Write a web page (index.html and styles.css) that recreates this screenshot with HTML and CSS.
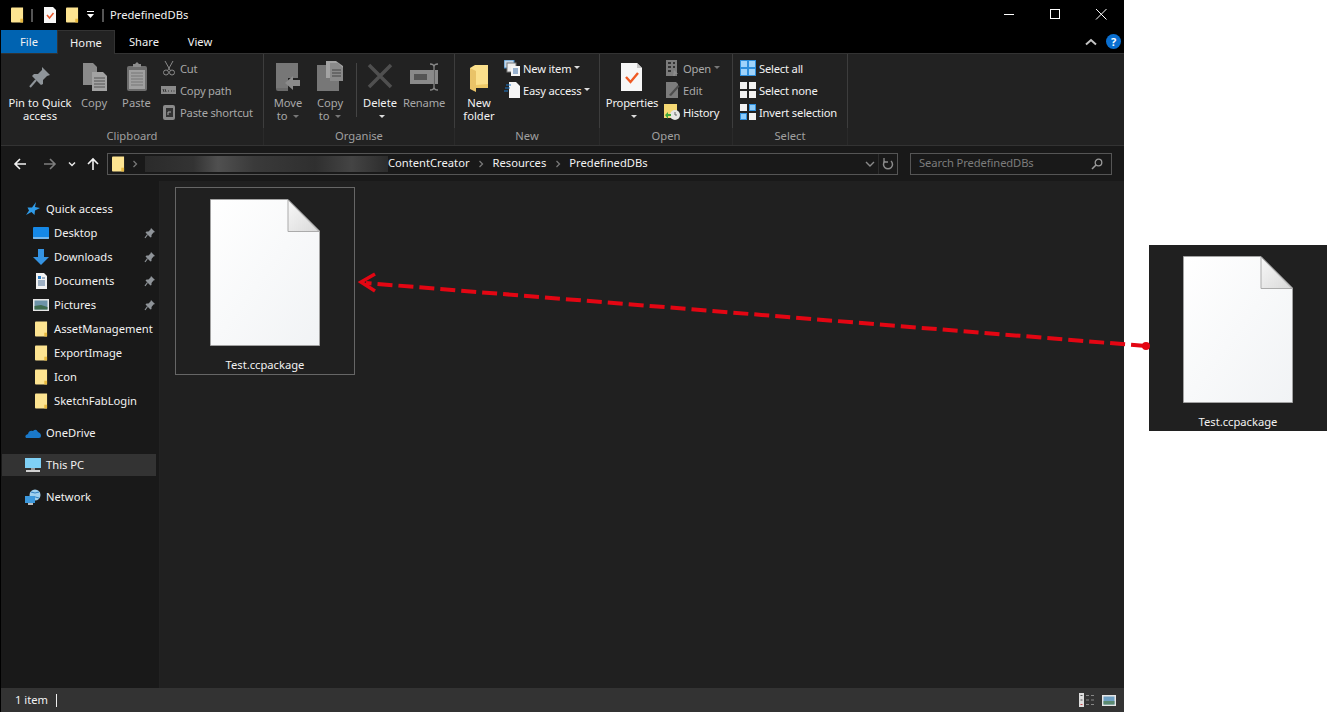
FILE: index.html
```html
<!DOCTYPE html>
<html lang="en">
<head>
    <meta charset="utf-8">
    <title>PredefinedDBs</title>
    <link rel="stylesheet" href="styles.css">
</head>
<body>
<svg class="defs" width="0" height="0">
    <defs>
        <symbol id="folder" viewBox="0 0 14 16">
            <path d="M0 1Q0 0 1 0H13V16H1Q0 16 0 15Z" fill="#fde491"/>
            <path d="M10 12H13V16H10Z" fill="#e8b93f"/>
        </symbol>
        <symbol id="pin" viewBox="0 0 12 12">
            <path d="M7 1L11 5L9.500 5.500L7.500 8V10L6.500 10.500L1.500 5.500L2.500 4.500H4.500L6.500 2.500Z" fill="#8f9499"/>
            <path d="M3.500 7.500L1 11" stroke="#8f9499" stroke-width="1.200"/>
        </symbol>
        <symbol id="doc" viewBox="0 0 110 147">
            <linearGradient id="paper" x1="0" y1="0" x2="1" y2="1">
                <stop offset="0" stop-color="#ffffff"/>
                <stop offset="1" stop-color="#f1f3f5"/>
            </linearGradient>
            <linearGradient id="fold" x1="0" y1="0" x2="1" y2="1">
                <stop offset="0" stop-color="#f8f8f8"/>
                <stop offset="1" stop-color="#d9d9d9"/>
            </linearGradient>
            <path d="M.5 .5H78L109.500 32V146.500H.5Z" fill="url(#paper)" stroke="#a2a2a2"/>
            <path d="M78 1V32.500H109Z" fill="url(#fold)" stroke="#ababab"/>
        </symbol>
    </defs>
</svg>

<div class="window">
    <header class="titlebar">
        <svg class="qa-folder"><use href="#folder"/></svg>
        <span class="qa-sep"></span>
        <svg class="qa-props" viewBox="0 0 12 16">
            <path d="M0 0H9L12 3V16H0Z" fill="#f7f7f7"/>
            <path d="M3 8L5.500 11L9.500 6" fill="none" stroke="#e8562a" stroke-width="1.500"/>
        </svg>
        <svg class="qa-folder qa-folder-2"><use href="#folder"/></svg>
        <svg class="qa-menu" viewBox="0 0 8 8">
            <path d="M0 .5H7" stroke="#fff"/>
            <path d="M0 3H7L3.500 7Z" fill="#fff"/>
        </svg>
        <span class="qa-sep qa-sep-2"></span>
        <span class="title-text">PredefinedDBs</span>
        <div class="window-controls">
            <svg viewBox="0 0 46 30"><path d="M18 14.500H28" stroke="#fff"/></svg>
            <svg viewBox="0 0 46 30"><rect x="18.500" y="9.500" width="9" height="9" fill="none" stroke="#fff"/></svg>
            <svg viewBox="0 0 46 30"><path d="M18 9L28.500 19.500M28.500 9L18 19.500" stroke="#fff"/></svg>
        </div>
    </header>

    <nav class="tabs">
        <span class="tab tab-file">File</span>
        <span class="tab tab-home">Home</span>
        <span class="tab tab-share">Share</span>
        <span class="tab tab-view">View</span>
        <svg class="collapse" viewBox="0 0 12 8"><path d="M1 6.500L6 2L11 6.500" fill="none" stroke="#c4c4c4" stroke-width="2"/></svg>
        <span class="help">?</span>
    </nav>

    <section class="ribbon">
        <div class="group group-clipboard">
            <div class="tools">
                <div class="big w-pin on">
                    <svg viewBox="0 0 32 32"><path d="M18 7L26 15L23 16L19 20V24L17 25L8 16L10 14H14L18 10Z" fill="#8f959a"/><path d="M12 20L6 27" stroke="#8f959a" stroke-width="2"/></svg>
                    <span>Pin to Quick<br>access</span>
                </div>
                <div class="big w-copy">
                    <svg viewBox="0 0 32 32"><path d="M5 3H15L19 7V25H5Z" fill="#8a8a8a"/><path d="M14 12H25L29 16V31H14Z" fill="#a3a3a3"/><path d="M16 18H27M16 21H27M16 24H27M16 27H27" stroke="#555"/></svg>
                    <span>Copy</span>
                </div>
                <div class="big w-paste">
                    <svg viewBox="0 0 32 32"><rect x="6" y="6" width="20" height="25" rx="2" fill="#6e6e6e"/><rect x="8" y="10" width="16" height="19" fill="#a0a0a0"/><path d="M12 7V4H14L16 2L18 4H20V7Z" fill="#8c8c8c"/><path d="M10 13H22M10 16H22M10 19H22M10 22H22M10 25H22" stroke="#777"/></svg>
                    <span>Paste</span>
                </div>
                <div class="smalls smalls-clip">
                    <div class="small"><svg viewBox="0 0 16 16"><path d="M4 1L9 10M12 1L7 10" stroke="#8a8a8a" fill="none"/><circle cx="5" cy="12.500" r="2.500" fill="none" stroke="#8a8a8a"/><circle cx="11" cy="12.500" r="2.500" fill="none" stroke="#8a8a8a"/></svg>Cut</div>
                    <div class="small"><svg viewBox="0 0 16 16"><rect x="0" y="4" width="15" height="8" fill="#8a8a8a"/><path d="M2 7L3 10M4 7L5 10M7 9H8M10 9H11M12.500 9H13.500" stroke="#333"/></svg>Copy path</div>
                    <div class="small"><svg viewBox="0 0 16 16"><rect x="2" y="1" width="12" height="15" rx="2" fill="#8a8a8a"/><rect x="5" y="4" width="7" height="9" fill="#333"/><path d="M7 11V8H10" stroke="#aaa" fill="none"/></svg>Paste shortcut</div>
                </div>
            </div>
            <div class="group-label">Clipboard</div>
        </div>

        <div class="group group-organise">
            <div class="tools">
                <div class="big w-move">
                    <svg viewBox="0 0 32 32"><path d="M4 3H26V18H16V28H4Z" fill="#777"/><path d="M4 28H16V31H6Q4 31 4 29Z" fill="#6a6a6a"/><path d="M28 20V26H21V30L13 23L21 16V20Z" fill="#8b8b8b"/></svg>
                    <span>Move<br>to <i class="caret"></i></span>
                </div>
                <div class="big w-copyto">
                    <svg viewBox="0 0 32 32"><path d="M3 5H25V31H3Z" fill="#777"/><path d="M12 1H22L29 6V18H12Z" fill="#a3a3a3"/><path d="M16 3H24L29 8V21H16Z" fill="#8a8a8a"/><path d="M18 10H27M18 13H27M18 16H27" stroke="#444"/></svg>
                    <span>Copy<br>to <i class="caret"></i></span>
                </div>
                <span class="ribbon-divider"></span>
                <div class="big w-delete on">
                    <svg viewBox="0 0 32 32"><path d="M5 5L27 27M27 5L5 27" stroke="#4f4f4f" stroke-width="3.500"/></svg>
                    <span>Delete<br><i class="caret caret-on"></i></span>
                </div>
                <div class="big w-rename">
                    <svg viewBox="0 0 32 32"><rect x="2" y="10" width="24" height="14" fill="#8a8a8a"/><rect x="6" y="14" width="13" height="6" fill="#555"/><path d="M26 6V28M22 4Q26 4 26 7Q26 4 30 4M22 30Q26 30 26 27Q26 30 30 30" stroke="#888" fill="none" stroke-width="1.300"/><rect x="27" y="10" width="3" height="14" fill="#8a8a8a"/></svg>
                    <span>Rename</span>
                </div>
            </div>
            <div class="group-label">Organise</div>
        </div>

        <div class="group group-new">
            <div class="tools">
                <div class="big w-newfolder on">
                    <svg viewBox="0 0 32 32"><path d="M7 8L12 5H25V28H7Z" fill="#fbe08c"/><path d="M7 8L13 11V32L7 29Z" fill="#e9c368"/><path d="M13 28H25V24L13 25Z" fill="#e8bf57" opacity=".7"/></svg>
                    <span>New<br>folder</span>
                </div>
                <div class="smalls smalls-new on">
                    <div class="small"><svg viewBox="0 0 16 16"><rect x="0" y="0" width="10" height="8" fill="#c5d6e6" stroke="#3a87c8"/><rect x="3" y="3" width="9" height="9" fill="#eee" stroke="#777"/><rect x="7" y="6" width="9" height="10" fill="#f5f5f5"/><path d="M9 9H14M9 11H14M9 13H14" stroke="#3a6ea8"/></svg>New item <i class="caret caret-on"></i></div>
                    <div class="small"><svg viewBox="0 0 16 16"><path d="M5 0H12L16 4V16H5Z" fill="#f5f5f5"/><path d="M2 3H7M1 6H6M0 9H4" stroke="#1e78c8" stroke-width="1.200"/></svg>Easy access <i class="caret caret-on"></i></div>
                </div>
            </div>
            <div class="group-label">New</div>
        </div>

        <div class="group group-open">
            <div class="tools">
                <div class="big w-props on">
                    <svg viewBox="0 0 32 32"><path d="M5 3H21L26 8V31H5Z" fill="#f7f7f7"/><path d="M21 3V8H26Z" fill="#c8c8c8"/><path d="M10 17L14.500 22L22 13" fill="none" stroke="#ef5a24" stroke-width="2.400"/></svg>
                    <span>Properties<br><i class="caret caret-on"></i></span>
                </div>
                <div class="smalls smalls-open">
                    <div class="small"><svg viewBox="0 0 16 16"><rect x="2" y="0" width="11" height="16" fill="#7c7c7c"/><path d="M4 3H7M9 3H11M4 7H7M9 7H11M4 11H7" stroke="#333" stroke-width="2"/><path d="M10 10L14 14H11V16H9Z" fill="#8c8c8c"/></svg>Open <i class="caret"></i></div>
                    <div class="small"><svg viewBox="0 0 16 16"><path d="M2 0H12L14 2V16H2Z" fill="#7c7c7c"/><path d="M5 13L14 3L15.500 4.500L7 14Z" fill="#4c4c4c"/></svg>Edit</div>
                    <div class="small on"><svg viewBox="0 0 16 16"><rect x="0" y="0" width="13" height="14" fill="#f5d873"/><circle cx="11" cy="11" r="5" fill="#e6e6e6"/><path d="M11 8V11H13" stroke="#666" fill="none"/><path d="M1 11L4 8V10H7V12H4V15Z" fill="#3ea83a"/></svg>History</div>
                </div>
            </div>
            <div class="group-label">Open</div>
        </div>

        <div class="group group-select">
            <div class="tools">
                <div class="smalls smalls-select on">
                    <div class="small"><span class="grid4 grid-all"><i></i><i></i><i></i><i></i></span>Select all</div>
                    <div class="small"><span class="grid4 grid-none"><i></i><i></i><i></i><i></i></span>Select none</div>
                    <div class="small"><span class="grid4 grid-invert"><i></i><i></i><i></i><i></i></span>Invert selection</div>
                </div>
            </div>
            <div class="group-label">Select</div>
        </div>
    </section>

    <div class="addressbar">
        <svg class="nav-btn nav-back" viewBox="0 0 14 14"><path d="M13 7H2M7 2L2 7L7 12" fill="none" stroke="#f2f2f2" stroke-width="1.600"/></svg>
        <svg class="nav-btn nav-forward" viewBox="0 0 14 14"><path d="M1 7H12M7 2L12 7L7 12" fill="none" stroke="#7e7e7e" stroke-width="1.600"/></svg>
        <svg class="nav-recent" viewBox="0 0 8 6"><path d="M1 1.500L4 4.500L7 1.500" fill="none" stroke="#e8e8e8" stroke-width="1.500"/></svg>
        <svg class="nav-btn nav-up" viewBox="0 0 14 14"><path d="M7 13V2M2 7L7 2L12 7" fill="none" stroke="#f2f2f2" stroke-width="1.600"/></svg>
        <div class="address">
            <svg class="addr-folder"><use href="#folder"/></svg>
            <svg class="crumb-sep crumb-first" viewBox="0 0 6 8"><path d="M1.500 1L4.500 4L1.500 7" fill="none" stroke="#777" stroke-width="1.300"/></svg>
            <span class="addr-blur"></span>
            <span class="crumb">ContentCreator</span>
            <svg class="crumb-sep" viewBox="0 0 6 8"><path d="M1.500 1L4.500 4L1.500 7" fill="none" stroke="#777" stroke-width="1.300"/></svg>
            <span class="crumb">Resources</span>
            <svg class="crumb-sep" viewBox="0 0 6 8"><path d="M1.500 1L4.500 4L1.500 7" fill="none" stroke="#777" stroke-width="1.300"/></svg>
            <span class="crumb">PredefinedDBs</span>
            <svg class="addr-drop" viewBox="0 0 10 6"><path d="M1 1L5 5L9 1" fill="none" stroke="#8a8a8a" stroke-width="1.400"/></svg>
            <span class="addr-split"></span>
            <svg class="addr-refresh" viewBox="0 0 12 14"><path d="M3 4A4.500 4.500 0 1 0 9 4" fill="none" stroke="#8a8a8a" stroke-width="1.500"/><path d="M2 1V5H6" fill="none" stroke="#8a8a8a" stroke-width="1.300"/></svg>
        </div>
        <div class="search">
            <span class="search-text">Search PredefinedDBs</span>
            <svg viewBox="0 0 12 12"><circle cx="7.500" cy="4.500" r="3.300" fill="none" stroke="#9a9a9a" stroke-width="1.300"/><path d="M5 7L1 11" stroke="#9a9a9a" stroke-width="1.600"/></svg>
        </div>
    </div>

    <div class="body">
        <aside class="tree">
            <div class="tree-section">
                <div class="tree-item">
                    <svg viewBox="0 0 16 16"><path d="M11 1L10 6L15 7L10 9.500L9.500 14L6.500 11L1 14L4 9.500L2.500 6.500L7 6.500Z" fill="#2f9be8"/></svg>
                    <span>Quick access</span>
                </div>
                <div class="tree-item child">
                    <svg viewBox="0 0 16 16"><rect x="0" y="2" width="16" height="12" rx="1" fill="#1688e6"/><path d="M0 13H16" stroke="#d6e6f2"/></svg>
                    <span>Desktop</span>
                    <svg class="pin"><use href="#pin"/></svg>
                </div>
                <div class="tree-item child">
                    <svg viewBox="0 0 16 16"><path d="M5 0H11V8H16L8 16L0 8H5Z" fill="#3593e2"/></svg>
                    <span>Downloads</span>
                    <svg class="pin"><use href="#pin"/></svg>
                </div>
                <div class="tree-item child">
                    <svg viewBox="0 0 16 16"><path d="M3 0H11L14 3V16H3Z" fill="#f2f2f2"/><path d="M5 3H8V6H5Z" fill="#2a7fc8"/><path d="M5 8H12M5 10H12M5 12H12M9 5H12" stroke="#4a6f95"/></svg>
                    <span>Documents</span>
                    <svg class="pin"><use href="#pin"/></svg>
                </div>
                <div class="tree-item child">
                    <svg viewBox="0 0 16 16"><rect x="0" y="2" width="16" height="12" fill="#e6e6e6"/><rect x="1.500" y="3.500" width="13" height="9" fill="#6d93a8"/><path d="M1.500 9L8 8L14.500 10V12.500H1.500Z" fill="#3f6b4e"/></svg>
                    <span>Pictures</span>
                    <svg class="pin"><use href="#pin"/></svg>
                </div>
                <div class="tree-item child">
                    <svg class="tree-folder"><use href="#folder"/></svg>
                    <span>AssetManagement</span>
                </div>
                <div class="tree-item child">
                    <svg class="tree-folder"><use href="#folder"/></svg>
                    <span>ExportImage</span>
                </div>
                <div class="tree-item child">
                    <svg class="tree-folder"><use href="#folder"/></svg>
                    <span>Icon</span>
                </div>
                <div class="tree-item child">
                    <svg class="tree-folder"><use href="#folder"/></svg>
                    <span>SketchFabLogin</span>
                </div>
            </div>
            <div class="tree-section">
                <div class="tree-item">
                    <svg viewBox="0 0 16 16"><path d="M1 13Q-1 10 3 9Q4 5 8 6Q11 3 13 7Q16 8 16 11Q16 13 14 13Z" fill="#1a78c8"/></svg>
                    <span>OneDrive</span>
                </div>
            </div>
            <div class="tree-section">
                <div class="tree-item selected">
                    <svg viewBox="0 0 16 16"><rect x="0" y="1" width="16" height="10" fill="#7fd0f5"/><path d="M6 11H10V13H6Z" fill="#9a9a9a"/><path d="M1 14H15" stroke="#d0d0d0" stroke-width="2"/></svg>
                    <span>This PC</span>
                </div>
            </div>
            <div class="tree-section">
                <div class="tree-item">
                    <svg viewBox="0 0 16 16"><circle cx="10" cy="6" r="5.500" fill="#9fd0ef"/><path d="M6 3Q10 5 14 3M7 9Q10 7 14 9" stroke="#2f7fbf" fill="none"/><rect x="0" y="7" width="10" height="7" fill="#3c98dc"/><path d="M3 15H8" stroke="#bbb" stroke-width="2"/></svg>
                    <span>Network</span>
                </div>
            </div>
        </aside>
        <main class="files">
            <div class="tile tile-selected">
                <svg class="doc-icon"><use href="#doc"/></svg>
                <span class="tile-name">Test.ccpackage</span>
            </div>
        </main>
    </div>

    <footer class="statusbar">
        <span class="item-count">1 item</span>
        <span class="status-split"></span>
        <svg class="view-list" viewBox="0 0 15 14">
            <rect x="0" y="0" width="5" height="14" fill="#ddd"/>
            <path d="M1.500 2.500H3.500M1.500 7H3.500" stroke="#555"/>
            <path d="M1.500 11.500H3.500" stroke="#c44"/>
            <path d="M7 2.500H10M12 2.500H15M7 7H10M12 7H15M7 11.500H10M12 11.500H15" stroke="#888"/>
        </svg>
        <svg class="view-thumb" viewBox="0 0 14 11">
            <rect x="0" y="0" width="14" height="11" fill="#e6e6e6"/>
            <rect x="1.500" y="1.500" width="11" height="8" fill="#6ea0c4"/>
            <rect x="1.500" y="6" width="11" height="3.500" fill="#5c8a70"/>
        </svg>
    </footer>
</div>

<aside class="callout">
    <div class="tile">
        <svg class="doc-icon"><use href="#doc"/></svg>
        <span class="tile-name">Test.ccpackage</span>
    </div>
</aside>

<svg class="arrow" viewBox="0 0 1327 712">
    <path d="M1146 346L366 283" stroke="#e30613" stroke-width="4" stroke-dasharray="15 6" fill="none"/>
    <path d="M375 274L361 282L375 291" stroke="#e30613" stroke-width="3.500" fill="none"/>
    <circle cx="1146" cy="346" r="4" fill="#e30613"/>
</svg>
</body>
</html>
```

FILE: styles.css
```css
* {
    box-sizing: border-box;
}

html, body {
    margin: 0;
    height: 100%;
    overflow: hidden;
}

body {
    display: flex;
    width: 1327px;
    height: 712px;
    background: #fff;
    font-family: "Noto Sans", "Liberation Sans", sans-serif;
    font-size: 11.2px;
    color: #f2f2f2;
}

.defs {
    position: absolute;
}

.window {
    width: 1124px;
    height: 712px;
    display: flex;
    flex-direction: column;
    flex: none;
    background: #000;
    border-left: 1px solid #000;
}

/* title bar */
.titlebar {
    height: 30px;
    display: flex;
    align-items: center;
    flex: none;
}

.qa-folder {
    width: 13px;
    height: 16px;
    margin-left: 10px;
}

.qa-folder-2 {
    margin-left: 10px;
}

.qa-sep {
    width: 2px;
    height: 13px;
    margin-left: 7px;
    background: #555;
}

.qa-props {
    width: 12px;
    height: 16px;
    margin-left: 11px;
}

.qa-menu {
    width: 8px;
    height: 8px;
    margin-left: 8px;
}

.qa-sep-2 {
    margin-left: 7px;
}

.title-text {
    margin-left: 6px;
    padding-bottom: 2px;
}

.window-controls {
    margin-left: auto;
    display: flex;
}

.window-controls svg {
    width: 46px;
    height: 30px;
}

/* tabs */
.tabs {
    height: 24px;
    display: flex;
    align-items: stretch;
    flex: none;
    border-bottom: 1px solid #333;
}

.tab {
    display: flex;
    align-items: center;
    justify-content: center;
    height: 23px;
}

.tab-file {
    width: 56px;
    background: #0063b1;
}

.tab-home {
    width: 58px;
    height: 24px;
    background: #222;
    border: 1px solid #333;
    border-bottom: 0;
    position: relative;
}

.tab-share {
    width: 58px;
}

.tab-view {
    width: 54px;
}

.collapse {
    width: 12px;
    height: 8px;
    margin: 8px 0 0 auto;
}

.help {
    width: 15px;
    height: 15px;
    margin: 4px 3px 0 9px;
    border-radius: 50%;
    background: #0a6fd0;
    color: #fff;
    font-size: 11px;
    font-weight: 700;
    line-height: 15px;
    text-align: center;
}

/* ribbon */
.ribbon {
    height: 91px;
    display: flex;
    flex: none;
    background: #222;
}

.group {
    display: flex;
    flex-direction: column;
    flex: none;
    height: 91px;
}

.group-clipboard { width: 263px; }
.group-organise { width: 191px; }
.group-new { width: 145px; }
.group-open { width: 133px; }
.group-select { width: 115px; }

.tools {
    height: 74px;
    padding-top: 4px;
    display: flex;
    border-right: 1px solid #3d3d3d;
    color: #a8a8a8;
}

.group-label {
    height: 17px;
    text-align: center;
    line-height: 16px;
    color: #a0a0a0;
    border-right: 1px solid #2a2a2a;
}

.big {
    display: flex;
    flex-direction: column;
    align-items: center;
    flex: none;
    text-align: center;
    line-height: 13px;
    white-space: nowrap;
}

.big svg {
    width: 32px;
    height: 32px;
    margin: 2px 0 4px;
    flex: none;
}

.on {
    color: #f2f2f2;
}

.w-pin { width: 78px; }
.w-copy { width: 30px; }
.w-paste { width: 31px; margin-left: 12px; }
.w-move { width: 32px; margin-left: 8px; }
.w-copyto { width: 32px; margin-left: 10px; }
.w-delete { width: 36px; margin-left: 5px; }
.w-rename { width: 44px; margin-left: 4px; letter-spacing: -0.2px; }
.w-newfolder { width: 40px; margin-left: 4px; }
.w-props { width: 60px; margin-left: 2px; letter-spacing: -0.2px; }

.ribbon-divider {
    width: 1px;
    height: 54px;
    margin: 5px 0 0 10px;
    background: #444;
}

.smalls {
    display: flex;
    flex-direction: column;
    white-space: nowrap;
    letter-spacing: -0.2px;
}

.smalls-clip { margin-left: 9px; }
.smalls-new { margin-left: 5px; }
.smalls-open { margin-left: 2px; }
.smalls-select { margin-left: 7px; }

.small {
    height: 22px;
    padding-bottom: 2px;
    display: flex;
    align-items: center;
}

.small svg {
    width: 16px;
    height: 16px;
    margin-right: 3px;
    flex: none;
}

.caret {
    display: inline-block;
    width: 0;
    height: 0;
    margin: 0 0 2px 3px;
    border-left: 3px solid transparent;
    border-right: 3px solid transparent;
    border-top: 3px solid #777;
}

.caret-on {
    border-top-color: #ddd;
}

.grid4 {
    width: 16px;
    height: 16px;
    margin-right: 3px;
    display: grid;
    grid-template-columns: 7px 7px;
    grid-template-rows: 7px 7px;
    gap: 2px;
    flex: none;
}

.grid4 i {
    background: #f2f2f2;
}

.grid-all {
    padding: 0;
    background: #2f8fdc;
    border: 1px solid #2f8fdc;
    grid-template-columns: 6px 6px;
    grid-template-rows: 6px 6px;
}

.grid-all i {
    background: #9fd3fb;
}

.grid-invert i:nth-child(2),
.grid-invert i:nth-child(3) {
    background: #8ccbfa;
    outline: 1px solid #2f8fdc;
    outline-offset: -1px;
}

/* address bar */
.addressbar {
    height: 36px;
    display: flex;
    align-items: center;
    flex: none;
    background: #191919;
    border-top: 1px solid #333;
}

.nav-btn {
    width: 14px;
    height: 14px;
}

.nav-back { margin-left: 12px; }
.nav-forward { margin-left: 16px; }
.nav-up { margin-left: 10px; }

.nav-recent {
    width: 8px;
    height: 6px;
    margin-left: 11px;
}

.address {
    width: 791px;
    height: 22px;
    margin-left: 7px;
    display: flex;
    align-items: center;
    border: 1px solid #555;
    padding-left: 4px;
    white-space: nowrap;
}

.crumb {
    padding-bottom: 2px;
}

.search-text {
    padding-bottom: 2px;
    letter-spacing: -0.1px;
}

.addr-folder {
    width: 13px;
    height: 16px;
    flex: none;
}

.crumb-sep {
    width: 6px;
    height: 8px;
    margin: 0 8.5px;
    flex: none;
}

.crumb-first {
    margin: 0 7px 0 7px;
}

.addr-blur {
    width: 243px;
    height: 16px;
    flex: none;
    background: linear-gradient(90deg, #2b2b2b 0, #333 20%, #505050 30%, #3a3a3a 45%, #2f2f2f 70%, #444 85%, #2c2c2c 100%);
}

.addr-drop {
    width: 10px;
    height: 6px;
    margin-left: auto;
}

.addr-split {
    width: 1px;
    height: 20px;
    margin-left: 3px;
    background: #2c2c2c;
}

.addr-refresh {
    width: 12px;
    height: 14px;
    margin: 0 3px;
}

.search {
    width: 202px;
    height: 22px;
    margin-left: 12px;
    padding: 0 8px;
    display: flex;
    align-items: center;
    justify-content: space-between;
    border: 1px solid #555;
    color: #7c7c7c;
}

.search svg {
    width: 12px;
    height: 12px;
}

/* main area */
.body {
    flex: 1;
    display: flex;
    min-height: 0;
    background: #202020;
}

.tree {
    width: 159px;
    flex: none;
    padding-top: 16px;
    display: flex;
    flex-direction: column;
    gap: 8px;
    background: #191919;
    border-right: 1px solid #222;
}

.tree-item {
    height: 24px;
    width: 154px;
    margin-left: 1px;
    padding-left: 23px;
    display: flex;
    align-items: center;
    gap: 5px;
    white-space: nowrap;
}

.tree-item span {
    padding-bottom: 2px;
}

.tree-item svg {
    width: 16px;
    height: 16px;
    flex: none;
}

.tree-item .tree-folder {
    width: 13px;
    height: 16px;
    margin: 0 1px 0 2px;
}

.child {
    padding-left: 31px;
}

.selected {
    height: 22px;
    margin-top: 1px;
    margin-bottom: 1px;
    background: #333;
}

.tree-item .pin {
    width: 12px;
    height: 12px;
    margin-left: auto;
}

.files {
    flex: 1;
    padding: 6px 15px;
}

.tile {
    width: 180px;
    height: 188px;
    padding-top: 11px;
    display: flex;
    flex-direction: column;
    align-items: center;
}

.tile-selected {
    border: 1px solid #666;
}

.doc-icon {
    width: 110px;
    height: 147px;
    flex: none;
}

.tile-name {
    margin-top: 11px;
    line-height: 16px;
    color: #f2f2f2;
}

.statusbar {
    height: 24px;
    flex: none;
    display: flex;
    align-items: center;
    background: #333;
}

.item-count {
    margin-left: 14px;
    padding-bottom: 2px;
}

.status-split {
    width: 1px;
    height: 13px;
    margin-left: 8px;
    background: #eee;
}

.view-list {
    width: 15px;
    height: 14px;
    margin-left: auto;
}

.view-thumb {
    width: 14px;
    height: 11px;
    margin: 0 8px;
}

/* the cropped preview beside the window */
.callout {
    width: 178px;
    height: 186px;
    margin: 245px 0 0 25px;
    flex: none;
    background: #202020;
}

.callout .tile {
    width: 178px;
}

.arrow {
    position: absolute;
    top: 0;
    left: 0;
    width: 1327px;
    height: 712px;
    pointer-events: none;
}
```
